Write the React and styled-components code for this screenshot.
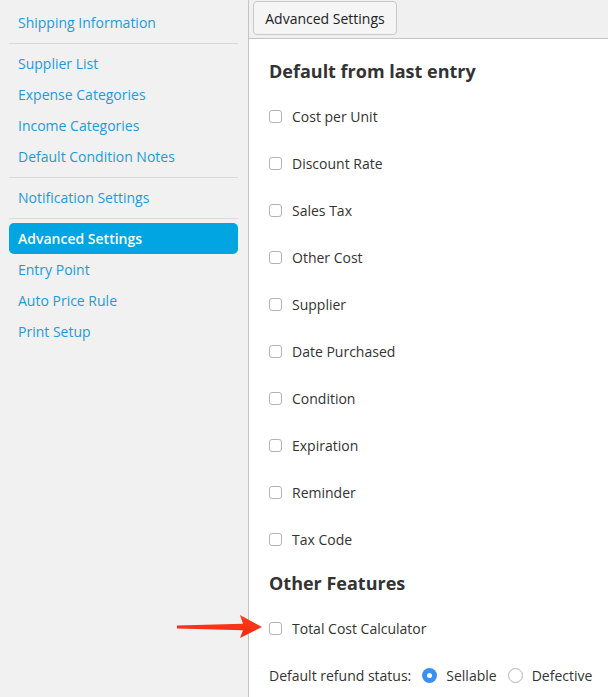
import React from "react";
import styled, { createGlobalStyle } from "styled-components";

const Global = createGlobalStyle`
  html, body { margin: 0; padding: 0; background: #fff; }
  body { font-family: "Open Sans", "Liberation Sans", sans-serif; }
  * { box-sizing: border-box; }
`;

const Page = styled.div`
  position: relative;
  display: flex;
  width: 608px;
  height: 697px;
  overflow: hidden;
`;

const Sidebar = styled.nav`
  width: 249px;
  flex: none;
  background: #f1f1f1;
  border-right: 1px solid #c4c4c4;
  padding-top: 7px;
  display: flex;
  flex-direction: column;
`;

const NavItem = styled.a`
  display: block;
  margin: 0 10px 0 9px;
  height: 31px;
  line-height: 31px;
  padding: 0 9px;
  font-size: 14px;
  color: ${(p) => (p.$active ? "#ffffff" : "#1f9ad8")};
  background: ${(p) => (p.$active ? "#00a5e2" : "transparent")};
  border-radius: 5px;
  font-weight: ${(p) => (p.$active ? 600 : 400)};
  text-decoration: none;
  white-space: nowrap;
`;

const Separator = styled.div`
  height: 1px;
  background: #dadada;
  margin: 5px 10px 4px 9px;
`;

const Main = styled.main`
  flex: 1;
  display: flex;
  flex-direction: column;
  background: #fff;
`;

const TopBar = styled.div`
  height: 39px;
  flex: none;
  background: #f0f0f0;
  border-bottom: 1px solid #c4c4c4;
  padding: 1px 0 0 4px;
`;

const TabButton = styled.button`
  height: 34px;
  width: 144px;
  border: 1px solid #c9c9c9;
  border-radius: 4px;
  background: #f5f5f5;
  font-family: inherit;
  font-size: 14px;
  color: #222;
  padding: 0;
`;

const Content = styled.div`
  padding: 20px 0 0 20px;
`;

const Heading = styled.h2`
  margin: ${(p) => (p.$first ? "0" : "8.5px")} 0 9.5px;
  height: 24px;
  line-height: 24px;
  font-size: 18px;
  font-weight: 700;
  color: #333;
`;

const Row = styled.label`
  display: flex;
  align-items: center;
  height: 47px;
  font-size: 14px;
  color: #333;
`;

const Box = styled.span`
  width: 13px;
  height: 13px;
  border: 1px solid #b3b3b3;
  border-radius: 3px;
  background: #fff;
  margin-right: 10px;
  flex: none;
`;

const RadioDot = styled.span`
  width: 15px;
  height: 15px;
  border-radius: 50%;
  flex: none;
  margin: 0 9px 0 ${(p) => p.$ml}px;
  background: ${(p) => (p.$on ? "#3a8ff5" : "#fff")};
  border: ${(p) => (p.$on ? "none" : "1px solid #b3b3b3")};
  display: flex;
  align-items: center;
  justify-content: center;
  &::after {
    content: "";
    width: 5px;
    height: 5px;
    border-radius: 50%;
    background: #fff;
    display: ${(p) => (p.$on ? "block" : "none")};
  }
`;

const Arrow = styled.svg`
  position: absolute;
  left: 170px;
  top: 605px;
`;

const navGroups = [
  ["Shipping Information"],
  ["Supplier List", "Expense Categories", "Income Categories", "Default Condition Notes"],
  ["Notification Settings"],
  ["Advanced Settings", "Entry Point", "Auto Price Rule", "Print Setup"],
];

const defaults = [
  "Cost per Unit",
  "Discount Rate",
  "Sales Tax",
  "Other Cost",
  "Supplier",
  "Date Purchased",
  "Condition",
  "Expiration",
  "Reminder",
  "Tax Code",
];

export default function App() {
  return (
    <>
      <Global />
      <Page>
        <Sidebar>
          {navGroups.map((g, gi) => (
            <React.Fragment key={gi}>
              {gi > 0 && <Separator />}
              {g.map((item) => (
                <NavItem key={item} $active={item === "Advanced Settings"}>
                  {item}
                </NavItem>
              ))}
            </React.Fragment>
          ))}
        </Sidebar>
        <Main>
          <TopBar>
            <TabButton>Advanced Settings</TabButton>
          </TopBar>
          <Content>
            <Heading $first>Default from last entry</Heading>
            {defaults.map((d) => (
              <Row key={d}>
                <Box />
                {d}
              </Row>
            ))}
            <Heading>Other Features</Heading>
            <Row>
              <Box />
              Total Cost Calculator
            </Row>
            <Row>
              Default refund status:
              <RadioDot $on $ml={11} />
              Sellable
              <RadioDot $ml={11} />
              Defective
            </Row>
          </Content>
        </Main>
        <Arrow width="100" height="45" viewBox="0 0 100 45">
          <defs>
            <linearGradient id="ag" x1="0" y1="0" x2="0" y2="1">
              <stop offset="0" stopColor="#ff3b1c" />
              <stop offset="1" stopColor="#f22a10" />
            </linearGradient>
          </defs>
          <path d="M7 20.6 L73 18.8 L70 10 L92 22 L70 33 L73 25.2 L7 23.4 Z" fill="url(#ag)" />
        </Arrow>
      </Page>
    </>
  );
}
